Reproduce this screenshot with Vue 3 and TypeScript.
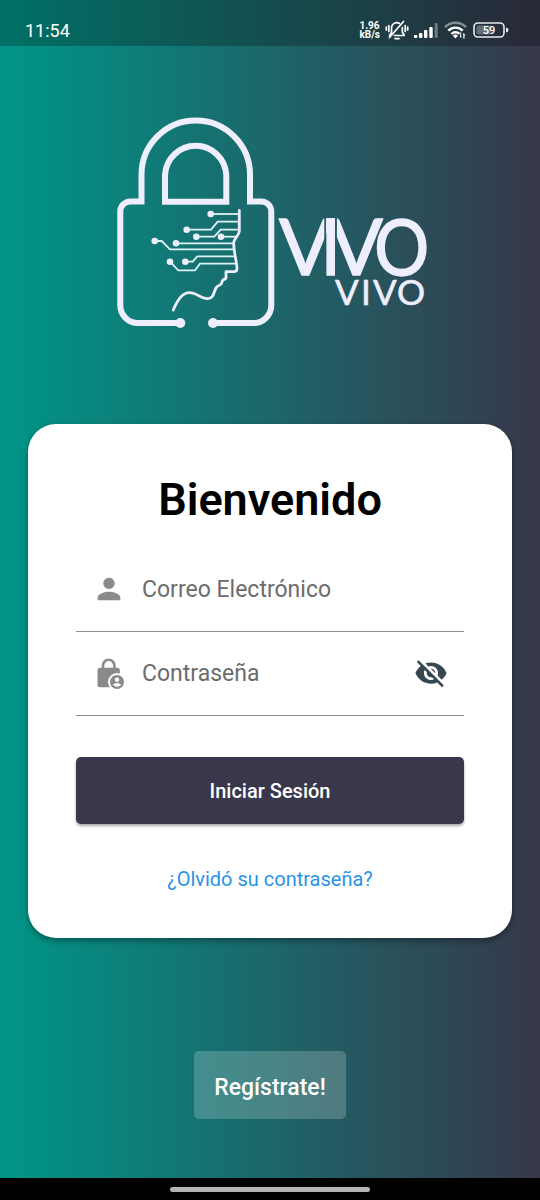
<script setup lang="ts">
import { ref } from 'vue'

interface Trace {
  d: string
  x: number
  y: number
}

const email = ref('')
const password = ref('')
const showPassword = ref(false)

const traces: Trace[] = [
  { x: 210.7, y: 214, d: 'M210.7 214H239' },
  { x: 186.7, y: 229.7, d: 'M186.7 229.7H211L217.7 221.7H239' },
  { x: 196.3, y: 236.7, d: 'M196.3 236.7H214.3L220.7 229.7H239' },
  { x: 221, y: 236.7, d: 'M221 236.7H236' },
  { x: 176, y: 243.3, d: 'M176 243.3H233.5' },
  { x: 154.7, y: 241, d: 'M154.7 241H161.7L170 249.3H234' },
  { x: 185.3, y: 261.7, d: 'M185.3 261.7H192.7L197.3 256.3H235' },
  { x: 170, y: 261.7, d: 'M170 261.7L178.3 270.3H195L200 263.7H236' },
]
</script>

<template>
  <div class="screen">
    <header class="status">
      <span class="clock">11:54</span>
      <div class="indicators">
        <div class="speed"><span>1.96</span><span>kB/s</span></div>
        <svg width="24" height="22" viewBox="0 0 24 22" aria-hidden="true">
          <g fill="none" stroke="#fff" stroke-width="1.7" stroke-linecap="round" stroke-linejoin="round">
            <path d="M6.500 13.500V9a5.300 5.300 0 0 1 8-4.600M17.300 8.500V13l2 3.500H9.500M4.500 16.500L6.500 13.500M18.500 2.500L4.500 18.500" />
            <path d="M10 19.600h4M3.800 6.500v6M20.200 6.500v6M1.300 8v3M22.700 8v3" />
          </g>
        </svg>
        <svg width="25" height="18" viewBox="0 0 25 18" aria-hidden="true">
          <g fill="#fff">
            <rect x="0" y="14" width="3.400" height="3" rx="1" />
            <rect x="5" y="12" width="3.400" height="5" rx="1" />
            <rect x="10" y="9" width="3.400" height="8" rx="1" />
            <rect x="15.300" y="6" width="3.400" height="11" rx="1" />
            <rect x="20.700" y="2" width="3" height="15" rx="1" opacity=".35" />
          </g>
        </svg>
        <svg width="24" height="18" viewBox="0 0 24 18" aria-hidden="true">
          <g fill="none" stroke="#fff" stroke-width="2.400">
            <path d="M1 6.200a14.500 14.500 0 0 1 21 0" opacity=".45" />
            <path d="M4.300 9.700a10 10 0 0 1 14.400 0" />
            <path d="M7.500 13a5.700 5.700 0 0 1 8-.2" />
          </g>
          <path fill="#fff" d="M8.800 14.700a4 4 0 0 1 5.200 0L11.500 17.500zM17.300 11.500v5.700l-2-2.200h1v-3.500zM19.300 17.500v-5.700l2.200 2.500h-1v3.200z" />
        </svg>
        <svg width="36" height="18" viewBox="0 0 36 18" aria-hidden="true">
          <rect x="1" y="2" width="30" height="14" rx="4" fill="none" stroke="#e8ebee" stroke-width="1.600" />
          <rect x="3.500" y="4.500" width="15" height="9" rx="2" fill="#fff" opacity=".3" />
          <path d="M33 6.500a2.500 2.500 0 0 1 0 5z" fill="#e8ebee" />
          <text x="16" y="13" class="level">59</text>
        </svg>
      </div>
    </header>

    <main class="content">
      <svg class="logo" viewBox="105 110 330 225" role="img" aria-label="Vivo Vivo">
        <mask id="stem" maskUnits="userSpaceOnUse" x="105" y="110" width="330" height="225">
          <rect x="105" y="110" width="330" height="225" fill="#fff" />
          <rect x="324.300" y="210" width="1.700" height="68" fill="#000" />
          <rect x="335" y="210" width="1.900" height="68" fill="#000" />
        </mask>
        <g class="outline">
          <path d="M180 323H138A17.700 17.700 0 0 1 120.300 305.300V211.500A10 10 0 0 1 130.300 201.500H141.500V174.700A54.200 54.200 0 0 1 250 174.700V201.500H261.300A10 10 0 0 1 271.300 211.500V305.300A17.700 17.700 0 0 1 253.600 323H213" />
          <path d="M165 201.700V175A30.700 31 0 0 1 226.300 175V201.700Z" />
        </g>
        <g class="fill">
          <circle cx="180.300" cy="323" r="5" />
          <circle cx="213" cy="323" r="5" />
          <circle v-for="t in traces" :key="t.d" :cx="t.x" :cy="t.y" r="3.300" />
        </g>
        <path v-for="t in traces" :key="t.d" class="trace" :d="t.d" />
        <path
          class="face"
          d="M239.300 210.500V231.500C239 235 234 239 233.700 242.500C233.500 252 237 262 237 268.500Q237 271.700 234 271.700H226V276.500Q226.500 279 223.500 279.500Q222 280.500 221.500 283.500Q220 285.500 217 286.500C213.300 290.500 215 299 206.700 298.700C200 297.700 196 292.700 189.300 292.700C181.700 292.700 176.700 301.700 173.300 310"
        />
        <g class="fill">
          <text class="mark" y="275" x="279 320 330 373" mask="url(#stem)">VIV<tspan class="round">O</tspan></text>
          <text class="submark" y="305" x="335 361 373 397">VIVO</text>
        </g>
      </svg>

      <form class="card" @submit.prevent>
        <h1>Bienvenido</h1>
        <label class="field">
          <svg width="34" height="34" viewBox="0 0 24 24" fill="#8a8a8a" aria-hidden="true">
            <path d="M12 12c2.210 0 4-1.790 4-4s-1.790-4-4-4-4 1.790-4 4 1.790 4 4 4zm0 2c-2.670 0-8 1.340-8 4v2h16v-2c0-2.660-5.330-4-8-4z" />
          </svg>
          <input v-model="email" type="email" placeholder="Correo Electrónico" aria-label="Correo Electrónico" />
        </label>
        <div class="field">
          <svg width="34" height="34" viewBox="0 0 34 34" aria-hidden="true">
            <path d="M11 13V9.500a5.700 5.700 0 0 1 11.400 0V13" fill="none" stroke="#8a8a8a" stroke-width="2.600" />
            <rect x="5.500" y="11.800" width="22.300" height="19.500" rx="2.500" fill="#8a8a8a" />
            <circle cx="25" cy="26" r="9" fill="#fff" />
            <circle cx="25" cy="26" r="7" fill="#8a8a8a" />
            <circle cx="25" cy="23.700" r="2.200" fill="#fff" />
            <path d="M20.800 28.600q4.200-3 8.400 0q-4.200 4.400-8.400 0z" fill="#fff" />
          </svg>
          <input
            v-model="password"
            :type="showPassword ? 'text' : 'password'"
            placeholder="Contraseña"
            aria-label="Contraseña"
          />
          <button class="eye" type="button" aria-label="Mostrar contraseña" @click="showPassword = !showPassword">
            <svg width="34" height="34" viewBox="0 0 24 24" fill="#37474f" aria-hidden="true">
              <path d="M12 7c2.760 0 5 2.240 5 5 0 .65-.13 1.260-.36 1.830l2.920 2.920c1.510-1.260 2.700-2.890 3.430-4.750-1.730-4.390-6-7.500-11-7.500-1.400 0-2.740.25-3.980.7l2.160 2.160C10.740 7.130 11.350 7 12 7zM2 4.270l2.280 2.280.46.46C3.080 8.300 1.780 10.020 1 12c1.730 4.390 6 7.500 11 7.500 1.550 0 3.030-.3 4.380-.84l.42.42L19.730 22 21 20.730 3.270 3 2 4.270zM7.530 9.800l1.550 1.550c-.05.21-.08.43-.08.65 0 1.660 1.340 3 3 3 .22 0 .44-.03.65-.08l1.550 1.550c-.67.33-1.410.53-2.200.53-2.760 0-5-2.240-5-5 0-.79.2-1.530.53-2.200zm4.310-.78l3.150 3.150.02-.16c0-1.660-1.340-3-3-3l-.17.01z" />
            </svg>
          </button>
        </div>
        <button class="login" type="submit">Iniciar Sesión</button>
        <a class="forgot" href="#">¿Olvidó su contraseña?</a>
      </form>

      <button class="register" type="button">Regístrate!</button>
    </main>

    <footer class="navbar"><span class="handle"></span></footer>
  </div>
</template>

<style>
body {
  margin: 0;
}
</style>

<style scoped>
.screen {
  display: flex;
  flex-direction: column;
  min-height: 100vh;
  font-family: Roboto, "Noto Sans", sans-serif;
  background: linear-gradient(90deg, #009688, #38374b);
}
.status {
  display: flex;
  align-items: center;
  justify-content: space-between;
  box-sizing: border-box;
  height: 46px;
  padding: 14px 31px 0 25px;
  background: rgba(0, 0, 0, 0.25);
  color: #fff;
}
.clock {
  font-size: 18px;
}
.indicators {
  display: flex;
  align-items: center;
  gap: 5px;
}
.speed {
  display: flex;
  flex-direction: column;
  font-size: 10px;
  line-height: 9px;
  font-weight: 700;
}
.level {
  font-size: 11px;
  font-weight: 500;
  fill: #fff;
  text-anchor: middle;
}
.content {
  display: flex;
  flex: 1;
  flex-direction: column;
  align-items: center;
  padding: 64px 28px 59px;
}
.logo {
  width: 100%;
  max-width: 330px;
}
.outline {
  fill: none;
  stroke: #eef;
  stroke-width: 6;
}
.fill {
  fill: #eef;
}
.trace {
  fill: none;
  stroke: #dff3f6;
  stroke-width: 1.8;
}
.face {
  fill: none;
  stroke: #eef;
  stroke-width: 2.8;
  stroke-linecap: round;
  stroke-linejoin: round;
}
.mark {
  font: 400 78px Lato, sans-serif;
  stroke: #eef;
  stroke-width: 1.4;
}
.round {
  font: 400 75px Inter, sans-serif;
}
.submark {
  font: 400 35px Lato, sans-serif;
  stroke: #eef;
  stroke-width: 0.6;
}
.card {
  display: flex;
  flex-direction: column;
  box-sizing: border-box;
  width: 100%;
  margin-top: 89px;
  padding: 48px 48px 46px;
  border-radius: 28px;
  background: #fff;
  box-shadow: 0 3px 6px rgba(0, 0, 0, 0.35);
}
h1 {
  margin: 0 0 20px;
  color: #000;
  font-size: 45px;
  font-weight: 600;
  line-height: 56px;
  text-align: center;
}
.field {
  display: flex;
  align-items: center;
  gap: 16px;
  box-sizing: border-box;
  height: 84px;
  padding: 0 16px 1px;
  border-bottom: 1px solid #8e8e8e;
}
.field svg {
  display: block;
  flex: none;
}
input {
  flex: 1;
  min-width: 0;
  padding: 0;
  border: 0;
  outline: 0;
  background: none;
  color: #222;
  font: 400 23px Roboto, "Noto Sans", sans-serif;
}
input::placeholder {
  color: #6c6c6c;
  opacity: 1;
}
button {
  border: 0;
  font-family: inherit;
  cursor: pointer;
}
.eye {
  padding: 0;
  background: none;
}
.login {
  height: 67px;
  margin-top: 41px;
  border-radius: 5px;
  background: #38374b;
  box-shadow: 0 2px 3px rgba(0, 0, 0, 0.35);
  color: #fff;
  font-size: 20px;
  font-weight: 500;
}
.forgot {
  align-self: center;
  margin-top: 42px;
  color: #2b93e6;
  font-size: 20px;
  line-height: 26px;
  text-decoration: none;
}
.register {
  height: 68px;
  margin-top: auto;
  padding: 4px 20px 0;
  border-radius: 5px;
  background: rgba(255, 255, 255, 0.2);
  color: #fff;
  font-size: 23px;
  font-weight: 500;
}
.navbar {
  display: flex;
  align-items: center;
  justify-content: center;
  height: 22px;
  background: #000;
}
.handle {
  width: 37%;
  height: 5px;
  border-radius: 3px;
  background: #b4b4b4;
}
</style>
